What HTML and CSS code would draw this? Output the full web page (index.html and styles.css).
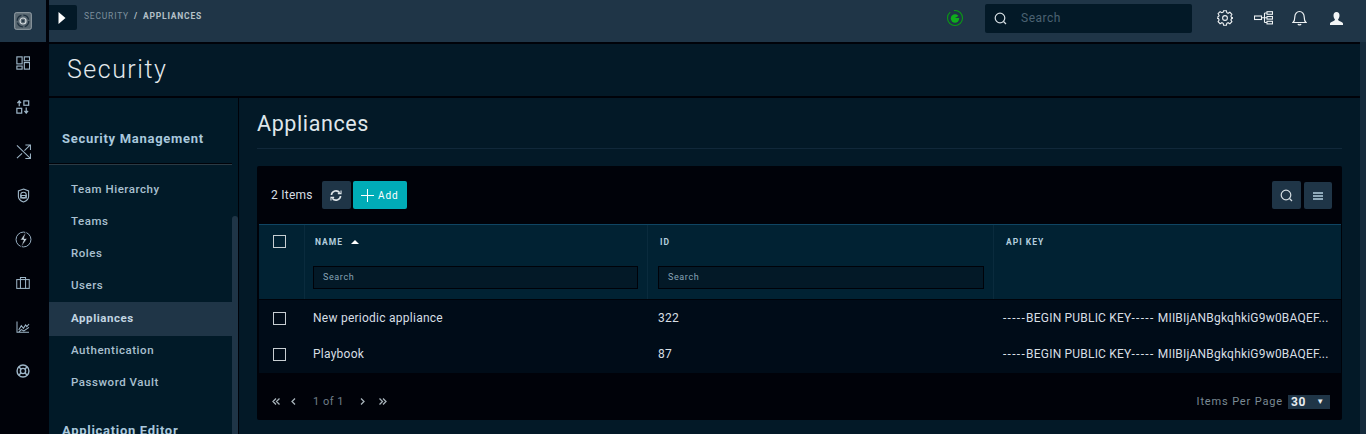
FILE: index.html
```html
<!DOCTYPE html>
<html lang="en">
<head>
<meta charset="utf-8">
<title>Security / Appliances</title>
<link rel="stylesheet" href="styles.css">
</head>
<body>
<div class="app">
  <aside class="rail">
    <div class="rail-top">
      <svg class="logo" width="18" height="18" viewBox="0 0 18 18" fill="none"><rect x=".7" y=".7" width="16.6" height="16.6" rx="1.5" fill="#56656f" stroke="#9aa4ab" stroke-width="1"/><circle cx="9" cy="9" r="5.800" stroke="#1d2f3e" stroke-width="1.300" stroke-dasharray="7 2"/><circle cx="9" cy="9" r="3" stroke="#d5dbdf" stroke-width="1.200"/><circle cx="9" cy="9" r="1" fill="#1d2f3e"/></svg>
    </div>
    <nav class="rail-icons">
      <span class="rail-icon"><svg width="14" height="14" viewBox="0 0 16 16" fill="none" stroke="#9db6c8" stroke-width="1.300"><rect x="1" y="1" width="6" height="8"/><rect x="9.500" y="1" width="6" height="4.500"/><rect x="1" y="11.500" width="6" height="3.500"/><rect x="9.500" y="7.500" width="6" height="7.500"/></svg></span>
      <span class="rail-icon"><svg width="14" height="14" viewBox="0 0 16 16" fill="none" stroke="#9db6c8" stroke-width="1.400"><rect x="9" y="1" width="5.500" height="5"/><rect x="1" y="9.500" width="5.500" height="5.500"/><path d="M3.700 7V1.500M1.600 3.600l2.100-2.400 2.100 2.400M11.700 8.500v6M9.600 12.500l2.100 2.500 2.100-2.500"/></svg></span>
      <span class="rail-icon"><svg width="15" height="15" viewBox="0 0 16 16" fill="none" stroke="#9db6c8" stroke-width="1.100"><path d="M1 1.500l14 13.500M1 15l5.500-5M9 7l6-5.700M10 1h5.400v5.500M15.400 10v5.400H10"/></svg></span>
      <span class="rail-icon"><svg width="13" height="15" viewBox="0 0 14 16" fill="none" stroke="#9db6c8" stroke-width="1.200"><path d="M7 1l5.500 2v6c0 3-3 5-5.500 6-2.500-1-5.500-3-5.500-6V3z"/><circle cx="7" cy="7.500" r="3"/><path d="M4 8h6v2.500H4z"/></svg></span>
      <span class="rail-icon"><svg width="17" height="17" viewBox="0 0 16 16" fill="none" stroke="#9db6c8" stroke-width=".9"><circle cx="8" cy="8" r="7"/><path d="M10.500 .5L5 8.500h3l-2.500 7 6-8.500H8.500z" fill="#c8d7e0" stroke="#000209" stroke-width=".6"/></svg></span>
      <span class="rail-icon"><svg width="14" height="12" viewBox="0 0 16 14" fill="none" stroke="#9db6c8" stroke-width="1.200"><rect x=".7" y="3" width="14.600" height="10.300"/><path d="M5 3V.7h6V3M5 3v10.300M11 3v10.300"/></svg></span>
      <span class="rail-icon"><svg width="14" height="12" viewBox="0 0 16 14" fill="none" stroke="#9db6c8" stroke-width="1.200"><path d="M1 .5V13H15M3 10.500l3-5 2.500 3L11 4.500l1.500 2L15 3.500M3 13l3-3 3 1.500 6-4"/></svg></span>
      <span class="rail-icon"><svg width="14" height="14" viewBox="0 0 16 16" fill="none" stroke="#9db6c8" stroke-width="1.600"><circle cx="8" cy="8" r="6.800"/><circle cx="8" cy="8" r="3"/><path d="M3.200 3.200l2.700 2.700M12.800 3.200l-2.700 2.700M3.200 12.800l2.700-2.700M12.800 12.800l-2.700-2.700"/></svg></span>
    </nav>
  </aside>
  <div class="main">
    <header class="topbar">
      <div class="crumbs">
        <span class="toggle"><svg width="10" height="12" viewBox="0 0 10 12"><path d="M1.500 0L8.500 6 1.500 12z" fill="#fff"/></svg></span>
        <span class="crumb">SECURITY</span><span class="crumb-sep">/</span><span class="crumb-now">APPLIANCES</span>
      </div>
      <div class="top-right">
        <svg class="status" width="18" height="18" viewBox="0 0 18 18" fill="none"><circle cx="9" cy="9" r="7.500" stroke="#0a9a14" stroke-width="1.100" stroke-dasharray="30 4"/><circle cx="9" cy="9.500" r="4.200" fill="#0fae1c"/><path d="M9 9l5-3v3z" fill="#1f3547"/></svg>
        <div class="top-search">
          <svg width="13" height="13" viewBox="0 0 13 13" fill="none" stroke="#d5dde2" stroke-width="1.200"><circle cx="6" cy="6" r="4.800"/><path d="M9.500 9.500l2.500 2.500"/></svg>
          <span>Search</span>
        </div>
        <div class="top-icons">
          <svg class="gear" width="16" height="16" viewBox="0 0 16 16" fill="none" stroke="#eef2f4" stroke-width="1.100"><circle cx="8" cy="8" r="2.400"/><path d="M6.600 .7h2.800l.4 2 1.300.6 1.800-1 2 2-1 1.800.6 1.300 2 .4v0l0 .4v0l-2 .4-.6 1.300 1 1.800-2 2-1.800-1-1.300.6-.4 2H6.600l-.4-2-1.300-.6-1.800 1-2-2 1-1.800-.6-1.300-1.800-.4V7.200l1.800-.4.600-1.300-1-1.800 2-2 1.800 1 1.300-.6z"/></svg>
          <svg width="19" height="14" viewBox="0 0 19 14" fill="none" stroke="#eef2f4" stroke-width="1.100"><rect x=".5" y="5" width="7" height="3.500"/><rect x="13" y=".7" width="5.500" height="2.600"/><rect x="13" y="5.500" width="5.500" height="2.600"/><rect x="13" y="10.300" width="5.500" height="2.600"/><path d="M7.500 6.700h3M10.500 2v9.500M10.500 2H13M10.500 6.700H13M10.500 11.500H13"/></svg>
          <svg class="bell" width="15" height="16" viewBox="0 0 15 16" fill="none" stroke="#eef2f4" stroke-width="1.200"><path d="M1 12.500c1.500-1.200 1.800-2.500 1.800-5.500 0-3 2-5.500 4.700-5.500s4.700 2.500 4.700 5.500c0 3 .3 4.300 1.800 5.500z"/><path d="M6 14c.3 1.100 2.700 1.100 3 0"/></svg>
          <svg class="user" width="13" height="13" viewBox="0 0 13 13"><path d="M6.500 0C8.500 0 9.500 1.500 9.500 3.500S8.500 7 8 7.500c0 1 .8 1.200 2.500 2 1.500.7 2.500 1 2.500 2.200V13H0v-1.300c0-1.200 1-1.500 2.500-2.200 1.700-.8 2.500-1 2.500-2C4.500 7 3.500 5.500 3.500 3.500S4.500 0 6.500 0z" fill="#f2f5f6"/></svg>
        </div>
      </div>
    </header>
    <div class="page-title"><h1>Security</h1></div>
    <div class="columns">
      <aside class="side">
        <div class="side-scroll"></div>
        <h2 class="side-head">Security Management</h2>
        <ul class="side-list">
          <li>Team Hierarchy</li>
          <li>Teams</li>
          <li>Roles</li>
          <li>Users</li>
          <li class="active">Appliances</li>
          <li>Authentication</li>
          <li>Password Vault</li>
        </ul>
        <h2 class="side-head next">Application Editor</h2>
      </aside>
      <main class="content">
        <h2 class="content-title">Appliances</h2>
        <section class="panel">
          <div class="toolbar">
            <span class="count">2 Items</span>
            <button class="btn"><svg width="12" height="11" viewBox="0 0 13 12" fill="none" stroke="#dfe5e9" stroke-width="1.800"><path d="M1.500 5.500A5 5 0 0 1 10.500 3M11.500 6.500A5 5 0 0 1 2.500 9"/><path d="M12 .5v3.500H8.500M1 11.500V8h3.500" stroke-width="1.200"/></svg></button>
            <button class="btn add"><svg width="13" height="13" viewBox="0 0 13 13" stroke="#fff" stroke-width="1"><path d="M6.500 0v13M0 6.500h13"/></svg>Add</button>
            <div class="tool-right">
              <button class="btn"><svg width="13" height="13" viewBox="0 0 13 13" fill="none" stroke="#d5dde2" stroke-width="1.200"><circle cx="6" cy="6" r="4.800"/><path d="M9.500 9.500l2.500 2.500"/></svg></button>
              <button class="btn menu"><svg width="10" height="8" viewBox="0 0 10 8" stroke="#b5cfe0" stroke-width="1.300"><path d="M0 1h10M0 4h10M0 7h10"/></svg></button>
            </div>
          </div>
          <div class="grid-table">
            <div class="head">
              <div class="col chk"><span class="box"></span></div>
              <div class="col name"><div class="label">NAME <svg class="sort" width="8" height="4" viewBox="0 0 8 4"><path d="M0 4L4 0l4 4z" fill="#fff"/></svg></div><div class="filter">Search</div></div>
              <div class="col idc"><div class="label">ID</div><div class="filter">Search</div></div>
              <div class="col key"><div class="label">API KEY</div></div>
            </div>
            <div class="row">
              <div class="cell chk"><span class="box"></span></div>
              <div class="cell name">New periodic appliance</div>
              <div class="cell idc">322</div>
              <div class="cell key"><span class="dash">-----</span>BEGIN PUBLIC KEY<span class="dash">-----</span> MIIBIjANBgkqhkiG9w0BAQEF...</div>
            </div>
            <div class="row">
              <div class="cell chk"><span class="box"></span></div>
              <div class="cell name">Playbook</div>
              <div class="cell idc">87</div>
              <div class="cell key"><span class="dash">-----</span>BEGIN PUBLIC KEY<span class="dash">-----</span> MIIBIjANBgkqhkiG9w0BAQEF...</div>
            </div>
          </div>
          <footer class="pager">
            <div class="pages">
              <svg class="pg first" width="8" height="7" viewBox="0 0 8 7" fill="none" stroke="#a7b3ba" stroke-width="1.300"><path d="M4 .5L1 3.500 4 6.500M7.500 .5L4.500 3.500 7.500 6.500"/></svg>
              <svg class="pg prev" width="5" height="7" viewBox="0 0 5 7" fill="none" stroke="#a7b3ba" stroke-width="1.300"><path d="M4 .5L1 3.500 4 6.500"/></svg>
              <em>1 of 1</em>
              <svg class="pg next" width="5" height="7" viewBox="0 0 5 7" fill="none" stroke="#a7b3ba" stroke-width="1.300"><path d="M1 .5L4 3.500 1 6.500"/></svg>
              <svg class="pg last" width="8" height="7" viewBox="0 0 8 7" fill="none" stroke="#a7b3ba" stroke-width="1.300"><path d="M.5 .5L3.500 3.500 .5 6.500M4 .5L7 3.500 4 6.500"/></svg>
            </div>
            <div class="per-page">Items Per Page <span class="select"><b>30</b><i>▼</i></span></div>
          </footer>
        </section>
      </main>
    </div>
    <div class="page-scroll"></div>
  </div>
</div>
</body>
</html>
```

FILE: styles.css
```css
* { box-sizing: border-box; }
html, body { margin: 0; height: 434px; overflow: hidden; background: #000209; }
body { font-family: "Roboto", "Liberation Sans", sans-serif; color: #d7dfe4; }
h1, h2, ul { margin: 0; padding: 0; }
button { border: 0; padding: 0; font: inherit; color: inherit; cursor: pointer; }

.app { display: flex; height: 434px; }
.rail { width: 49px; flex: none; background: #000209; border-right: 2px solid #000209; }
.rail-top { height: 42px; background: #1f3547; display: flex; align-items: center; justify-content: center; margin-right: 1px; }
.rail-icons { display: flex; flex-direction: column; margin-top: -1px; padding-right: 1px; }
.rail-icon { height: 44px; display: flex; align-items: center; justify-content: center; }

.main { flex: 1; min-width: 0; display: flex; flex-direction: column; background: #000209; position: relative; }
.page-scroll { position: absolute; right: 0; top: 42px; bottom: 0; width: 6px; background: #162b3c; }
.topbar { height: 42px; flex: none; background: #1f3547; display: flex; justify-content: space-between; align-items: flex-start; }
.crumbs { display: flex; align-items: flex-start; font-size: 8.500px; letter-spacing: .8px; line-height: 32px; }
.toggle { width: 28px; height: 25px; margin-top: 5px; background: #031927; border-radius: 0 2px 2px 0; display: flex; align-items: center; justify-content: center; margin-right: 7px; padding-right: 2px; }
.crumb { color: #7d909d; }
.crumb-sep { color: #b5c1c9; font-weight: 700; margin: 0 5px 0 5px; }
.crumb-now { color: #b5c1c9; font-weight: 700; }
.top-right { display: flex; align-items: center; height: 36px; padding-right: 23px; }
.status { margin-right: 21px; }
.top-search { width: 207px; height: 29px; background: #031927; border-radius: 2px; display: flex; align-items: center; padding-left: 9px; font-size: 12px; color: #4b6272; letter-spacing: .5px; margin-right: 25px; }
.top-search span { margin-left: 14px; }
.top-icons { display: flex; align-items: center; gap: 21px; }
.bell { margin-left: -2px; }
.user { margin-left: 2px; }

.page-title { height: 54px; margin-top: 2px; flex: none; background: #031927; display: flex; align-items: center; padding: 0 0 2px 18px; border-bottom: 2px solid #000209; }
.page-title h1 { font-weight: 300; font-size: 25px; letter-spacing: 1.500px; color: #e2e8ec; }

.columns { flex: 1; display: flex; min-height: 0; background: #031927; }
.side { width: 190px; flex: none; background: #011a28; border-right: 1px solid #000209; padding-top: 32px; position: relative; overflow: hidden; }
.side-scroll { position: absolute; right: 0; top: 118px; width: 6px; bottom: 0; background: #1f3547; border-radius: 3px 3px 0 0; }
.side-head { font-size: 13px; font-weight: 700; color: #a9c8dd; letter-spacing: .7px; padding-left: 13px; line-height: 18px; }
.side-list { list-style: none; margin: 15px 6px 0 0; padding-top: 9px; border-top: 1px solid #000209; box-shadow: inset 0 1px #2b3a44; }
.side-list li { height: 32px; line-height: 32px; padding-left: 22px; font-size: 11.500px; font-weight: 500; color: #a9c0d0; letter-spacing: .55px; }
.side-list li.active { height: 34px; margin: 1px 0 -2px; background: #1f3547; color: #c2d5e2; font-weight: 700; }
.side-head.next { margin-top: 24px; }

.content { flex: 1; min-width: 0; padding: 0 24px 0 18px; }
.content-title { font-weight: 400; font-size: 21.500px; letter-spacing: .6px; color: #dfe6ea; height: 51px; line-height: 52px; border-bottom: 1px solid #11283a; }
.panel { margin-top: 17px; height: 254px; background: #000209; border-radius: 2px; display: flex; flex-direction: column; }

.toolbar { height: 58px; flex: none; display: flex; align-items: center; padding: 0 10px 0 14px; }
.count { font-size: 12px; color: #d7dfe4; letter-spacing: .25px; margin-right: 9px; }
.btn { width: 29px; height: 28px; background: #1f3547; border-radius: 2px; display: flex; align-items: center; justify-content: center; }
.btn.add { width: 54px; margin-left: 2px; background: #00acb7; color: #fff; font-size: 10px; font-weight: 400; letter-spacing: .9px; gap: 4px; }
.tool-right { margin-left: auto; display: flex; gap: 3px; }
.btn.menu { width: 28px; height: 27px; margin-top: 1px; }

.grid-table { margin: 0 1px 0 2px; background: #000c18; }
.head, .row { display: grid; grid-template-columns: 45px 343px 346px 1fr; }
.head { height: 76px; background: #012233; border-top: 1px solid #0f4563; border-bottom: 1px solid #000209; }
.col { padding: 11px 10px 0 10px; border-left: 1px solid #0a2b3d; }
.col.idc, .col.key { padding-left: 12px; }
.col.chk { border-left: 0; padding: 10px 0 0 14px; }
.label { font-size: 8.500px; font-weight: 700; letter-spacing: 1px; color: #b3cede; line-height: 12px; }
.sort { margin-left: 5px; vertical-align: 1px; }
.box { display: block; width: 13px; height: 13px; border: 1px solid #c7ced2; }
.filter { margin: 18px 0 0 -2px; height: 23px; line-height: 21px; width: 325px; background: #031927; border: 1px solid #000209; font-size: 9px; letter-spacing: .6px; color: #87a3b6; padding-left: 9px; }
.idc .filter { width: 326px; }
.row { height: 36px; align-items: center; font-size: 12px; letter-spacing: .25px; color: #d7dfe4; }
.row + .row { height: 37px; }
.row + .row .cell:not(.chk) { padding-bottom: 2px; }
.cell.chk { padding-left: 14px; }
.cell.name { padding-left: 9px; }
.cell.idc { padding-left: 11px; }
.cell.key { padding-left: 10px; white-space: nowrap; letter-spacing: .2px; }
.dash { letter-spacing: 1.300px; }

.pager { flex: 1; display: flex; justify-content: space-between; align-items: center; padding: 8px 12px 0 15px; font-size: 11px; color: #7b8a94; }
.pages { display: flex; align-items: center; padding-top: 2px; }
.pg { display: block; }
.pg.prev { margin-left: 11px; }
.pg.last { margin-left: 14px; }
.pages em { font-style: normal; color: #6f7e88; letter-spacing: .5px; margin: 0 16px 0 17px; font-size: 11px; }
.per-page { display: flex; align-items: center; letter-spacing: .85px; gap: 5px; padding-top: 2px; }
.select { width: 42px; height: 14px; background: #1f3547; display: flex; align-items: center; justify-content: space-between; padding: 0 5px 0 3px; color: #e8edf0; }
.select b { font-size: 12px; letter-spacing: .6px; }
.select i { font-style: normal; font-size: 8px; }
```
